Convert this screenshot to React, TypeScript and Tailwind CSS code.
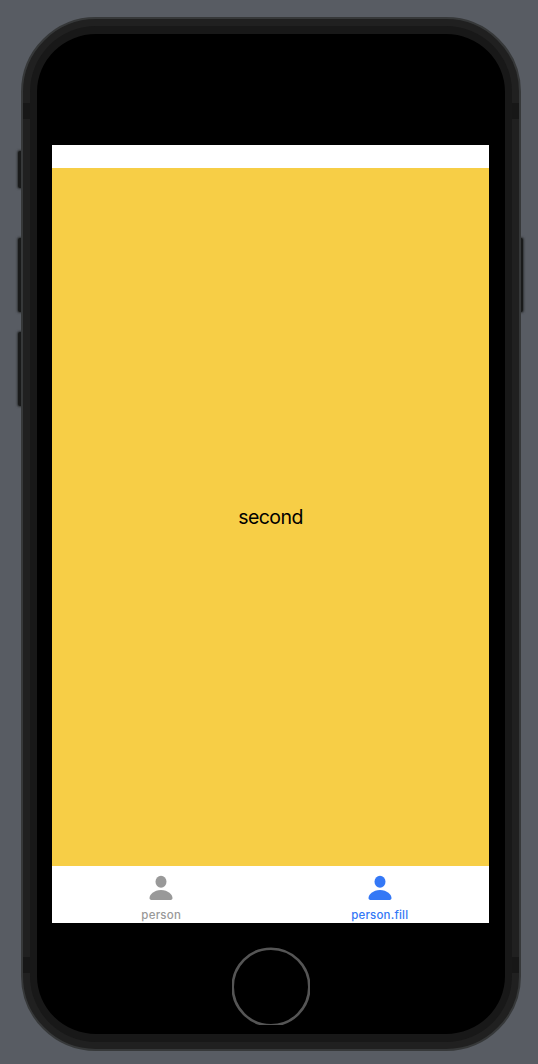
import React from "react";

function PersonIcon() {
  return (
    <svg width="24" height="26" viewBox="0 0 24 26" fill="currentColor" className="block">
      <ellipse cx="12" cy="6.800" rx="5.500" ry="6" />
      <path d="M3.200 25C1.500 25 .5 24.300 .5 22.900 .5 19.500 5 14.900 12 14.900s11.500 4.600 11.500 8c0 1.400-1 2.100-2.700 2.100Z" />
    </svg>
  );
}

function Tab({ label, active = false }: { label: string; active?: boolean }) {
  return (
    <button
      className={`flex flex-1 flex-col items-center pt-[9px] ${
        active ? "text-[#3478f6]" : "text-[#999999]"
      }`}
    >
      <PersonIcon />
      <span
        className={`mt-[7px] text-[11.500px] leading-[14px] font-medium ${
          active ? "tracking-[0.2px]" : "tracking-[0.25px]"
        }`}
      >
        {label}
      </span>
    </button>
  );
}

function SideButton({ className }: { className: string }) {
  return <span className={`absolute w-[5px] bg-[#191a1a] shadow-[0_0_2px_1px_#303334] ${className}`} />;
}

function AntennaBand({ className }: { className: string }) {
  return <span className={`absolute h-4 w-[7px] bg-[#171717] ${className}`} />;
}

export default function App() {
  return (
    <main className="flex h-[1064px] w-[538px] overflow-hidden bg-[#585c63] pt-[17px] pl-[21px] font-['Inter',sans-serif]">
      <div className="relative h-[1034px] w-[500px]">
        <SideButton className="top-[134px] left-[-3px] h-[37px] rounded-l-[2px]" />
        <SideButton className="top-[221px] left-[-3px] h-[74px] rounded-l-[2px]" />
        <SideButton className="top-[315px] left-[-3px] h-[74px] rounded-l-[2px]" />
        <SideButton className="top-[221px] right-[-2px] h-[74px] rounded-r-[2px]" />
        <div className="relative h-full rounded-[75px] border-2 border-[#363839] bg-[#202020]">
          <AntennaBand className="top-[84px] left-0" />
          <AntennaBand className="top-[84px] right-0" />
          <AntennaBand className="bottom-[76px] left-0" />
          <AntennaBand className="bottom-[76px] right-0" />
          <div className="h-full p-[7px]">
            <div className="flex h-full flex-col rounded-[66px] border-x-[7px] border-y-[8px] border-[#181818] bg-black px-[15px] pt-[111px]">
              <section className="flex h-[778px] w-[437px] shrink-0 flex-col bg-white">
                <div className="h-[23px] shrink-0 bg-white" />
                <div className="flex h-[698px] shrink-0 items-center justify-center bg-[#f7ce46] text-[19.500px] leading-6 text-black">
                  <span className="tracking-[-0.55px]">second</span>
                </div>
                <nav className="flex h-[57px]">
                  <Tab label="person" />
                  <Tab label="person.fill" active />
                </nav>
              </section>
              <div className="mt-[24px] flex h-[78px] w-[78px] shrink-0 self-center overflow-hidden">
                <svg width="78" height="78" viewBox="0 0 78 78" fill="none">
                  <circle cx="39" cy="40" r="38.300" stroke="#555555" strokeWidth="2.600" />
                </svg>
              </div>
            </div>
          </div>
        </div>
      </div>
    </main>
  );
}
